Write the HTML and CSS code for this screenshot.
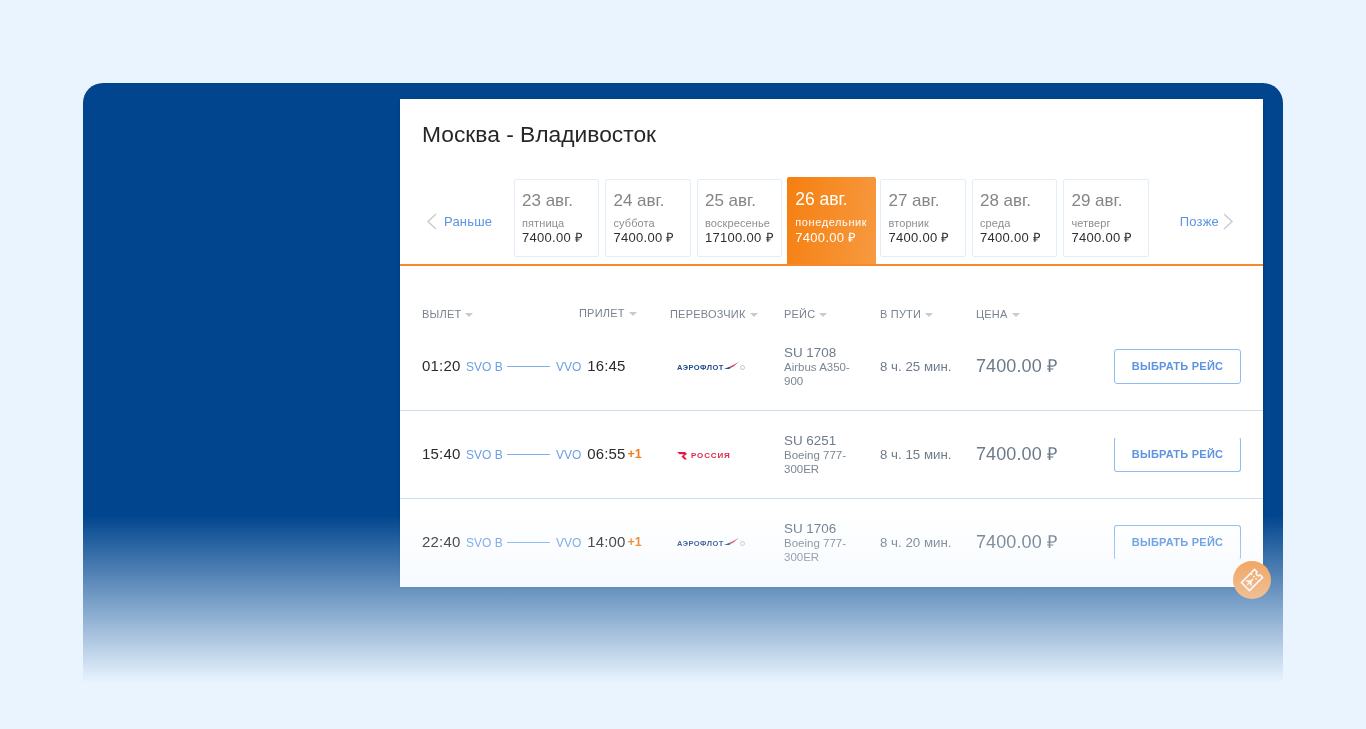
FILE: index.html
```html
<!DOCTYPE html>
<html lang="ru">
<head>
<meta charset="utf-8">
<title>Москва - Владивосток</title>
<link rel="stylesheet" href="styles.css">
</head>
<body>
<main class="panel">
  <section class="card">
    <h1 class="title">Москва - Владивосток</h1>
    <div class="dates">
      <a class="nav nav-prev"><svg class="chev" viewBox="0 0 11 17"><path d="M10 1 2 8.500l8 7.500"/></svg>Раньше</a>
      <div class="tabs">
        <div class="tab"><div class="tab-date">23 авг.</div><div class="tab-day">пятница</div><div class="tab-price">7400.00 ₽</div></div>
        <div class="tab"><div class="tab-date">24 авг.</div><div class="tab-day">суббота</div><div class="tab-price">7400.00 ₽</div></div>
        <div class="tab"><div class="tab-date">25 авг.</div><div class="tab-day">воскресенье</div><div class="tab-price">17100.00 ₽</div></div>
        <div class="tab tab-active"><div class="tab-date">26 авг.</div><div class="tab-day">понедельник</div><div class="tab-price">7400.00 ₽</div></div>
        <div class="tab"><div class="tab-date">27 авг.</div><div class="tab-day">вторник</div><div class="tab-price">7400.00 ₽</div></div>
        <div class="tab"><div class="tab-date">28 авг.</div><div class="tab-day">среда</div><div class="tab-price">7400.00 ₽</div></div>
        <div class="tab"><div class="tab-date">29 авг.</div><div class="tab-day">четверг</div><div class="tab-price">7400.00 ₽</div></div>
      </div>
      <a class="nav nav-next">Позже<svg class="chev" viewBox="0 0 11 17"><path d="M1 1l8 7.500L1 16"/></svg></a>
    </div>

    <div class="grid head">
      <div class="head-times">
        <span class="sort sort-dep">Вылет</span>
        <span class="sort sort-arr">Прилет</span>
      </div>
      <span class="sort">Перевозчик</span>
      <span class="sort">Рейс</span>
      <span class="sort">В пути</span>
      <span class="sort">Цена</span>
    </div>

    <div class="list">
      <article class="grid row">
        <div class="route"><span class="time">01:20</span><span class="code code-from">SVO B</span><i class="line"></i><span class="code">VVO</span><span class="time time-arr">16:45</span></div>
        <div class="logo logo-su"><span class="su-text">АЭРОФЛОТ</span><svg class="su-wing" viewBox="0 0 20 10"><path class="w-b" d="M0 9.500 10 5.500 7 9.500z"/><path class="w-w" d="M7 5.500 15 2.500 10 5.500z"/><path class="w-r" d="M7 9.500 10 5.500 20 0 13 6z"/></svg><i class="su-globe"></i></div>
        <div class="flight"><div class="num">SU 1708</div><div class="plane">Airbus A350-900</div></div>
        <div class="dur">8 ч. 25 мин.</div>
        <div class="price">7400.00 ₽</div>
        <button class="pick">Выбрать рейс</button>
      </article>
      <article class="grid row">
        <div class="route"><span class="time">15:40</span><span class="code code-from">SVO B</span><i class="line"></i><span class="code">VVO</span><span class="time time-arr">06:55</span><b class="plus">+1</b></div>
        <div class="logo logo-ru"><svg class="ru-mark" viewBox="0 0 11 9"><path d="M0 1h8l2 2-3 2 3 3.500H7.500L4.500 5.500 7 3.200H2.500z"/></svg><span class="ru-text">РОССИЯ</span></div>
        <div class="flight"><div class="num">SU 6251</div><div class="plane">Boeing 777-300ER</div></div>
        <div class="dur">8 ч. 15 мин.</div>
        <div class="price">7400.00 ₽</div>
        <button class="pick pick-open-top">Выбрать рейс</button>
      </article>
      <article class="grid row">
        <div class="route"><span class="time">22:40</span><span class="code code-from">SVO B</span><i class="line"></i><span class="code">VVO</span><span class="time time-arr">14:00</span><b class="plus">+1</b></div>
        <div class="logo logo-su"><span class="su-text">АЭРОФЛОТ</span><svg class="su-wing" viewBox="0 0 20 10"><path class="w-b" d="M0 9.500 10 5.500 7 9.500z"/><path class="w-w" d="M7 5.500 15 2.500 10 5.500z"/><path class="w-r" d="M7 9.500 10 5.500 20 0 13 6z"/></svg><i class="su-globe"></i></div>
        <div class="flight"><div class="num">SU 1706</div><div class="plane">Boeing 777-300ER</div></div>
        <div class="dur">8 ч. 20 мин.</div>
        <div class="price">7400.00 ₽</div>
        <button class="pick pick-open-bottom">Выбрать рейс</button>
      </article>
    </div>
    <div class="fab">
      <svg viewBox="0 0 24 24"><g transform="rotate(-45 12 12)"><path d="M3.500 6.800H20.500V10c-1.200 0-2 .8-2 2s.8 2 2 2v3.200H3.500z"/><path d="M15.500 7.500v9" stroke-dasharray="1.400 1.400"/><path class="fab-plane" d="M5.800 11.400h2.700L7.100 8.700h1.200l2.700 2.700h2.200c.6 0 .6 1.200 0 1.200H11l-2.700 2.700H7.100l1.400-2.700H5.800z"/></g></svg>
    </div>
  </section>
  <div class="fade"></div>
</main>
</body>
</html>
```
FILE: styles.css
```css
* { box-sizing: border-box; }
html, body { margin: 0; height: 729px; overflow: hidden; }
body {
  background: #eaf4fe;
  padding: 83px 83px 0;
  font-family: "Liberation Sans", Arial, sans-serif;
  color: #2b2b2b;
}
.panel {
  position: relative;
  height: 600px;
  background: #00458e;
  border-radius: 20px 20px 0 0;
  padding: 16px 20px 0 317px;
}
.fade {
  position: absolute;
  left: 0; right: 0; bottom: 0;
  height: 168px;
  background: linear-gradient(to bottom, rgba(234,244,254,0), #eaf4fe);
  pointer-events: none;
}
.card {
  position: relative;
  width: 863px;
  height: 488px;
  background: #fff;
  box-shadow: 0 1px 3px rgba(0,0,0,.15);
  padding-top: 20px;
}
.title {
  margin: 0 0 28px 22px;
  font-size: 22.8px;
  line-height: 30px;
  font-weight: 400;
  color: #262626;
  filter: blur(.35px);
}

/* dates strip */
.dates {
  display: flex;
  height: 89px;
  border-bottom: 2px solid #f58a2c;
  padding: 0 29px 0 26px;
}
.nav {
  display: flex;
  align-items: center;
  gap: 7px;
  height: 87px;
  padding-top: 2px;
  color: #5c93e2;
  font-size: 13px;
  letter-spacing: .2px;
  filter: blur(.35px);
}
.nav-prev { width: 88px; }
.nav-next { margin-left: auto; gap: 4px; }
.chev { width: 11px; height: 17px; flex: none; }
.chev path { fill: none; stroke: #c9cdd1; stroke-width: 1.5; }
.tabs { display: flex; gap: 6.2px; height: 87px; }
.tab {
  width: 85.3px;
  height: 78px;
  margin-top: 2px;
  border: 1px solid #e3ecf7;
  border-radius: 2px;
  padding: 11px 0 0 7px;
  background: #fff;
  filter: blur(.35px);
}
.tab-date { font-size: 17px; line-height: 20px; color: #858585; }
.tab-day { font-size: 11px; line-height: 13px; margin-top: 6px; color: #8a8f94; letter-spacing: .1px; white-space: nowrap; }
.tab-price { font-size: 13px; line-height: 15px; color: #2f2f2f; letter-spacing: .3px; white-space: nowrap; }
.tab-active {
  width: 89px;
  height: 87px;
  margin: 0 -2px 0 -1.200px;
  padding: 12px 0 0 8px;
  border: 0;
  border-radius: 2px 2px 0 0;
  background: linear-gradient(100deg, #f57f10, #f79a40);
  color: #fff;
}
.tab-active .tab-date, .tab-active .tab-day, .tab-active .tab-price { color: #fff; }
.tab-active .tab-date { font-size: 17.5px; }
.tab-active .tab-day { letter-spacing: .6px; margin-top: 7px; }
.tab-active .tab-price { margin-top: 1px; }

/* table */
.grid {
  display: grid;
  grid-template-columns: 248px 114px 96px 96px 138px 127px;
  padding: 0 22px;
  align-items: center;
}
.head {
  margin-top: 39px;
  height: 18px;
  font-size: 11px;
  letter-spacing: .2px;
  color: #78838f;
  filter: blur(.35px);
}
.head-times { display: flex; }
.sort-dep { width: 157px; }
.sort-arr { position: relative; top: -1px; }
.sort { text-transform: uppercase; white-space: nowrap; }
.sort::after {
  content: "";
  display: inline-block;
  margin-left: 4px;
  vertical-align: 1px;
  border: 4px solid transparent;
  border-top-color: #c7cbcf;
  border-bottom: 0;
}
.list { height: 241px; overflow: hidden; }
.row {
  height: 88px;
  border-bottom: 1px solid #cfdce9;
  filter: blur(.35px);
}
.route { display: flex; align-items: center; white-space: nowrap; margin-bottom: 2px; }
.time { font-size: 15px; letter-spacing: .2px; color: #2b2b2b; width: 44px; }
.time-arr { width: auto; margin-left: 6px; letter-spacing: .1px; }
.code { font-size: 12px; color: #6b9fe6; position: relative; top: 1px; }
.code-from { width: 36px; }
.line { width: 43px; height: 1px; margin: 1px 6px 0 5px; background: #7fb0ee; }
.plus { margin-left: 2px; font-size: 12.500px; color: #f07d1d; }

.logo { display: flex; align-items: center; }
.logo-su { padding: 2px 0 0 7px; }
.su-text {
  font-size: 7.500px;
  font-weight: 700;
  letter-spacing: .45px;
  color: #1c4a8a;
  white-space: nowrap;
}
.su-wing { width: 15px; height: 9px; position: relative; top: -2px; flex: none; }
.w-b { fill: #1c4a8a; }
.w-w { fill: #ccd6e6; }
.w-r { fill: #e2404e; }
.su-globe {
  width: 5px; height: 5px; margin-left: 1px; flex: none;
  border: 1px solid #b9c6d6; border-radius: 50%;
}
.logo-ru { padding: 2px 0 0 7px; gap: 3px; }
.ru-mark { width: 11px; height: 9px; fill: #e3173e; flex: none; }
.ru-text {
  font-size: 8px;
  font-weight: 700;
  letter-spacing: .85px;
  color: #e3274a;
}

.flight { width: 72px; }
.num { font-size: 13.400px; line-height: 15px; color: #6e7c8b; }
.plane { font-size: 11.500px; line-height: 14px; color: #7a8794; }
.dur { font-size: 13.300px; color: #6e7c8b; }
.price { font-size: 18px; letter-spacing: .1px; color: #6b7a8a; margin-bottom: 4px; }
.pick {
  width: 127px;
  height: 35px;
  padding: 0 0 2px;
  background: #fff;
  border: 1px solid #8fbcef;
  border-radius: 3px;
  color: #5d93e0;
  font: 700 11px "Liberation Sans", Arial, sans-serif;
  letter-spacing: .25px;
  text-transform: uppercase;
}
.pick-open-top { border-top-color: transparent; }
.pick-open-bottom { border-bottom-color: transparent; }

.fab {
  position: absolute;
  right: -8px;
  bottom: -12px;
  width: 38px;
  height: 38px;
  border-radius: 50%;
  background: #f58a2c;
  display: flex;
  align-items: center;
  justify-content: center;
}
.fab svg { width: 26px; height: 26px; fill: none; stroke: #fff; stroke-width: 1.500; }
.fab-plane { fill: #fff; stroke: none; }
```
